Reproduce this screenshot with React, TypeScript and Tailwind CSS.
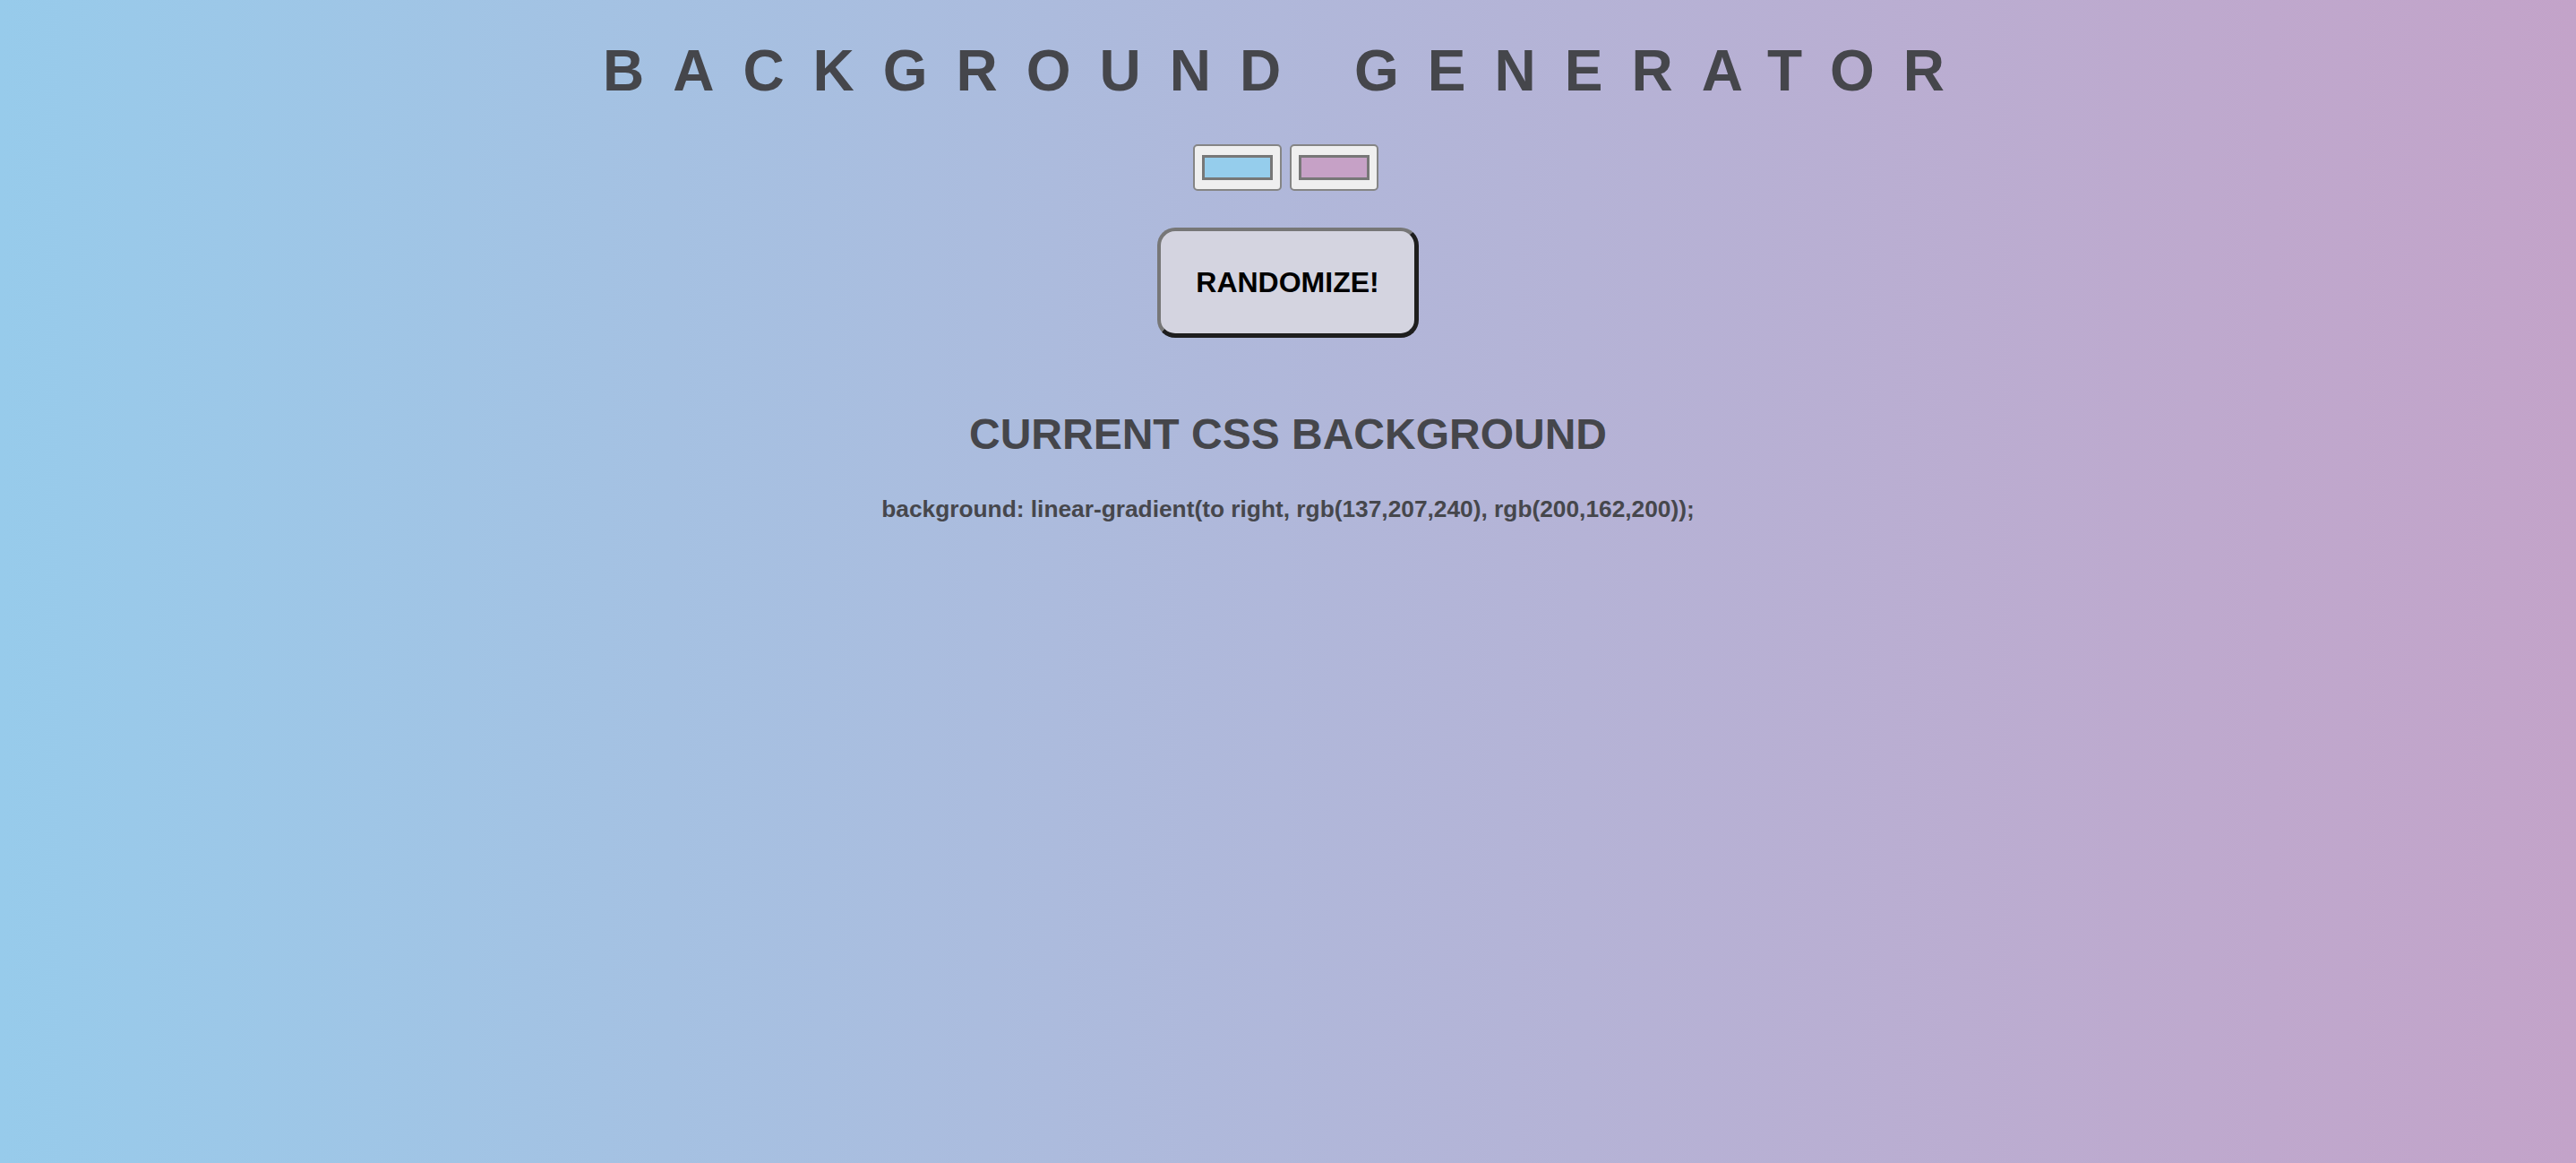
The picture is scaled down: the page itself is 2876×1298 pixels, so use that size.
import { useState } from 'react';

const FONT = "font-['Liberation_Sans',Arial,Helvetica,sans-serif]";

function toHex(c: [number, number, number]) {
  return '#' + c.map((v) => v.toString(16).padStart(2, '0')).join('');
}

export default function App() {
  const [left, setLeft] = useState<[number, number, number]>([137, 207, 240]);
  const [right, setRight] = useState<[number, number, number]>([200, 162, 200]);

  const randomize = () => {
    const r = (): [number, number, number] => [
      Math.floor(Math.random() * 256),
      Math.floor(Math.random() * 256),
      Math.floor(Math.random() * 256),
    ];
    setLeft(r());
    setRight(r());
  };

  const isDefault =
    left.join() === '137,207,240' && right.join() === '200,162,200';

  return (
    <main
      className={`min-h-screen w-full flex flex-col items-center ${FONT} ${
        isDefault ? 'bg-gradient-to-r from-[#97cbeb] to-[#c3a3c9]' : ''
      }`}
      style={
        isDefault
          ? undefined
          : { background: `linear-gradient(to right, rgb(${left}), rgb(${right}))` }
      }
    >
      {/* Title */}
      <h1 className="mt-[47px] text-[64px] leading-[64px] font-bold tracking-[32px] text-[#45464b] whitespace-pre">
        BACKGROUND GENERATOR
      </h1>

      {/* Color pickers */}
      <div className="mt-[50px] mr-[6px] flex gap-[9px]">
        {[left, right].map((c, i) => (
          <div
            key={i}
            className="w-[99px] h-[52px] bg-[#efefef] border-2 border-[#858585] rounded-[5px] flex items-center justify-center"
          >
            <div
              className="w-[79px] h-[28px] border-[3px] border-[#777777]"
              style={{ backgroundColor: i === 0 && isDefault ? '#95cdec' : i === 1 && isDefault ? '#c6a1c6' : toHex(c) }}
            />
          </div>
        ))}
      </div>

      {/* Randomize button */}
      <button
        onClick={randomize}
        className="mt-[41px] w-[292px] h-[123px] flex items-center justify-center bg-[#d4d4e0] rounded-[20px] border-t-4 border-l-4 border-r-[5px] border-b-[5px] border-t-[#777777] border-l-[#777777] border-r-[#1e1e1e] border-b-[#1e1e1e] text-[32px] leading-[37px] font-bold text-black"
      >
        RANDOMIZE!
      </button>

      {/* Current css */}
      <h2 className="mt-[84px] text-[48px] leading-[48px] font-bold text-[#45464b]">
        CURRENT CSS BACKGROUND
      </h2>
      <p className="mt-[46px] text-[26.3px] leading-[26px] font-bold text-[#46474c]">
        background: linear-gradient(to right, rgb({left.join(',')}), rgb({right.join(',')}));
      </p>
    </main>
  );
}
